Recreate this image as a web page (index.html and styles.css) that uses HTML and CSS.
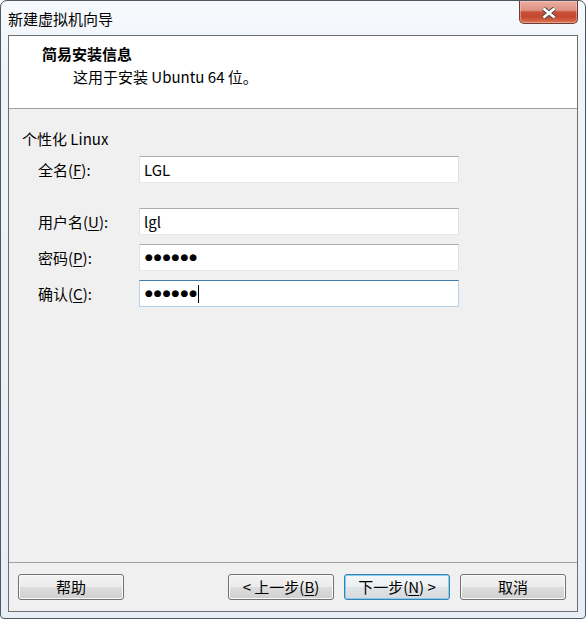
FILE: index.html
```html
<!DOCTYPE html>
<html lang="zh-CN">
<head>
<meta charset="utf-8">
<title>新建虚拟机向导</title>
<link rel="stylesheet" href="styles.css">
</head>
<body>
<div class="window">
  <div class="titlebar">
    <span class="title">新建虚拟机向导</span>
    <div class="close">
      <svg width="16" height="12" viewBox="0 0 16 12">
        <path d="M2.5 1.5 L13.5 10.5 M13.5 1.5 L2.5 10.5" stroke="#4a4a4a" stroke-width="4.6" fill="none"/>
        <path d="M2.5 1.5 L13.5 10.5 M13.5 1.5 L2.5 10.5" stroke="#ffffff" stroke-width="2.6" fill="none"/>
      </svg>
    </div>
  </div>
  <div class="client">
    <div class="header">
      <div class="h-title">简易安装信息</div>
      <div class="h-sub">这用于安装 Ubuntu 64 位。</div>
    </div>
    <div class="content">
      <div class="section">个性化 Linux</div>
      <div class="form">
        <div class="row row-first">
          <label class="lbl">全名(<u>F</u>):</label>
          <div class="field">LGL</div>
        </div>
        <div class="row row-gap">
          <label class="lbl">用户名(<u>U</u>):</label>
          <div class="field">lgl</div>
        </div>
        <div class="row">
          <label class="lbl">密码(<u>P</u>):</label>
          <div class="field"><span class="dots">●●●●●●</span></div>
        </div>
        <div class="row">
          <label class="lbl">确认(<u>C</u>):</label>
          <div class="field focused"><span class="dots">●●●●●●</span><span class="caret"></span></div>
        </div>
      </div>
    </div>
    <div class="footer">
      <button class="btn">帮助</button>
      <div class="nav">
        <button class="btn">&lt; 上一步(<u>B</u>)</button>
        <button class="btn btn-default">下一步(<u>N</u>) &gt;</button>
        <button class="btn">取消</button>
      </div>
    </div>
  </div>
</div>
</body>
</html>
```
FILE: styles.css
```css
* { box-sizing: border-box; }

html, body {
  margin: 0;
  padding: 0;
}

body {
  width: 586px;
  height: 619px;
  overflow: hidden;
  background: #ffffff;
  font-family: "Noto Sans CJK SC", "Microsoft YaHei", sans-serif;
  font-size: 15px;
  color: #000;
}

.window {
  position: relative;
  width: 586px;
  height: 619px;
  border: 1px solid #4f5862;
  border-radius: 7px 7px 4px 4px;
  background: linear-gradient(to bottom, #f7fafd 0px, #eff4f9 60px, #e8eef6 100%);
  display: flex;
  flex-direction: column;
}

.titlebar {
  height: 34px;
  padding: 8px 0 0 7px;
  line-height: 20px;
  flex: none;
}

.close {
  position: absolute;
  top: 0;
  right: 7px;
  width: 59px;
  height: 23px;
  border: 1px solid #6b3d37;
  border-top: none;
  border-radius: 0 0 5px 5px;
  background: linear-gradient(to bottom, #eab0a2 0%, #dd9181 42%, #c85038 50%, #c4482e 72%, #dc7456 100%);
  box-shadow: inset 0 0 0 1px rgba(255, 210, 200, 0.45);
  display: flex;
  align-items: center;
  justify-content: center;
}

.close svg {
  display: block;
  margin-top: 1px;
}

.client {
  flex: 1;
  margin: 0 7px 6px;
  border: 1px solid #6e6e6e;
  background: #f0f0f0;
  display: flex;
  flex-direction: column;
}

.header {
  height: 73px;
  flex: none;
  background: #ffffff;
  border-bottom: 1px solid #a0a0a0;
  padding: 8px 0 0 33px;
}

.h-title {
  font-weight: bold;
  line-height: 20px;
}

.h-sub {
  margin-top: 3px;
  margin-left: 31px;
  line-height: 20px;
}

.content {
  flex: 1;
  padding: 20px 0 0 13px;
}

.section {
  line-height: 20px;
}

.form {
  padding-left: 16px;
}

.row {
  display: flex;
  align-items: center;
  height: 27px;
  margin-top: 9px;
}

.row-first { margin-top: 7px; }
.row-gap { margin-top: 25px; }

.lbl {
  width: 101px;
  line-height: 20px;
}

u {
  text-underline-offset: 2px;
}

.field {
  width: 320px;
  height: 27px;
  background: #ffffff;
  border: 1px solid #e3e9ef;
  border-top-color: #abadb3;
  border-left-color: #e2e3ea;
  border-right-color: #dbdfe6;
  padding-left: 4px;
  line-height: 25px;
  display: flex;
  align-items: center;
}

.field.focused {
  border-color: #b5d3ec;
  border-top-color: #3d7bad;
}

.dots {
  font-family: "DejaVu Sans", sans-serif;
  font-size: 9px;
  letter-spacing: 1px;
  line-height: 25px;
  padding-left: 1px;
}

.caret {
  display: inline-block;
  width: 1px;
  height: 18px;
  background: #000;
}

.footer {
  height: 49px;
  flex: none;
  border-top: 1px solid #a0a0a0;
  padding: 11px 11px 0 9px;
  display: flex;
  justify-content: space-between;
  align-items: flex-start;
}

.nav {
  display: flex;
  gap: 10px;
}

.btn {
  width: 106px;
  height: 26px;
  margin: 0;
  padding: 0;
  font-family: inherit;
  font-size: 15px;
  line-height: 20px;
  color: #000;
  border: 1px solid #707070;
  border-radius: 3px;
  background: linear-gradient(to bottom, #f2f2f2 0%, #ebebeb 50%, #dddddd 51%, #cfcfcf 100%);
  box-shadow: inset 0 0 0 1px #fbfbfb;
}

.btn-default {
  border-color: #3c7fb1;
  box-shadow: inset 0 0 0 1px #7fd0f3;
  background: linear-gradient(to bottom, #f4f6f7 0%, #edf0f2 50%, #e0e4e7 51%, #d6dadd 100%);
}
```
